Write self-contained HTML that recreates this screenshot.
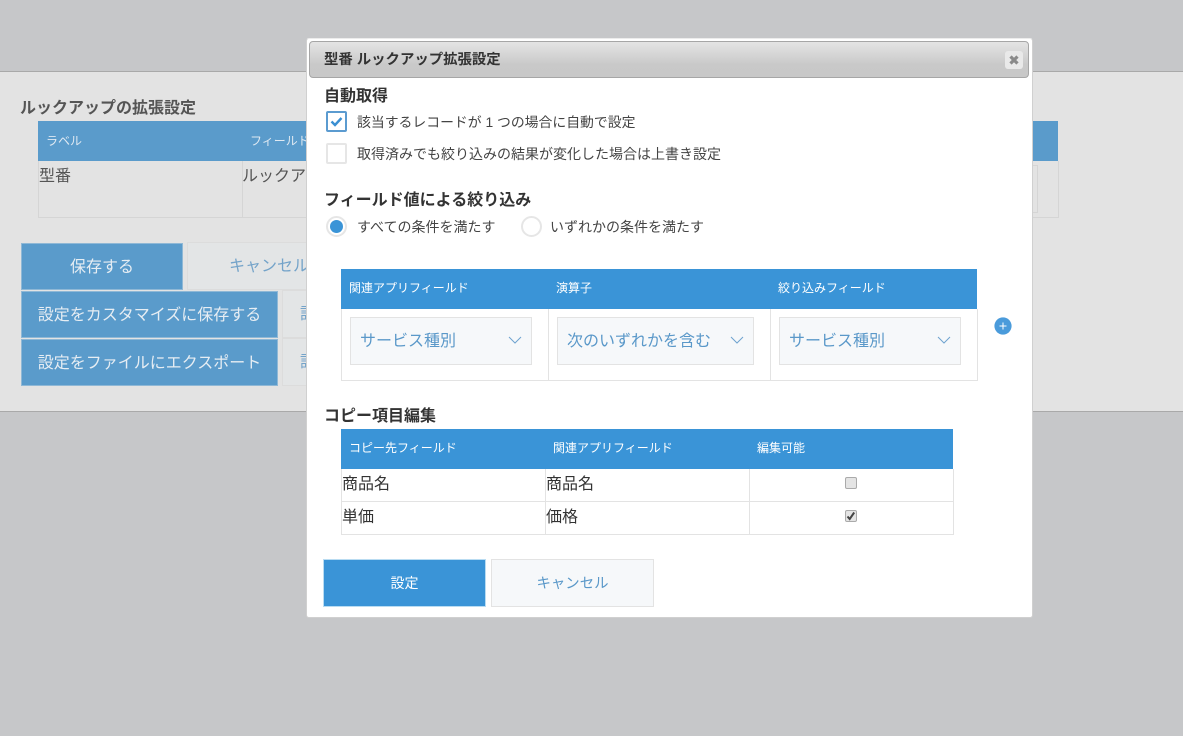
<!DOCTYPE html>
<html lang="ja">
<head>
<meta charset="utf-8">
<title>ルックアップ拡張設定</title>
<style>
html,body{margin:0;padding:0}
body{width:1183px;height:736px;overflow:hidden;position:relative;background:#c6c7c9;font-family:"Liberation Sans","Noto Sans CJK JP",sans-serif;color:#333}
.a{position:absolute;box-sizing:border-box;white-space:nowrap}
.panel{left:0;top:71px;width:1183px;height:341px;background:#e3e3e3;border-top:1px solid #a9a9a9;border-bottom:1px solid #a9a9a9}
.dialog{left:306px;top:38px;width:727px;height:580px;background:#fff;border:1px solid #d0d0d0;border-top-color:#ececec;border-radius:3px}
.title{left:309px;top:41px;width:720px;height:37px;background:linear-gradient(#e4e4e4,#c9c9c9 65%,#c8c8c8);border:1px solid #a6a6a6;border-radius:4px;font-weight:bold;font-size:14.4px;line-height:37px;padding-left:14px;color:#333}
.close{left:1005px;top:51px;width:18px;height:18px;background:#e9e9e9;border-radius:3px}
.h{font-size:16px;font-weight:bold;color:#333;line-height:20px}
.l{font-size:14px;color:#444;line-height:18px}
.th{font-size:12px;color:#fff;line-height:16px}
.td{font-size:16px;color:#333;line-height:20px}
.blue{background:#3a94d7}
.dim{background:#5a9bcb}
.vl{background:#e3e3e3;width:1px}
.hl{background:#e3e3e3;height:1px}
.sel{background:#f6f8fa;border:1px solid #e3e3e3;width:182px;height:48px;color:#5a98c9;font-size:16px;line-height:48px;padding-left:9px}
.btn{text-align:center;font-size:16px}
.dv{background:#d5d5d5;width:1px}
.dh{background:#d5d5d5;height:1px}
</style>
</head>
<body>
<div class="a panel"></div>

<div class="a" style="left:20px;top:99px;font-size:16px;font-weight:bold;color:#555;line-height:20px">ルックアップの拡張設定</div>
<div class="a dim" style="left:38px;top:121px;width:1020px;height:40px"></div>
<div class="a" style="left:46px;top:133px;font-size:12px;color:#dfe9f2;line-height:16px">ラベル</div>
<div class="a" style="left:250px;top:133px;font-size:12px;color:#dfe9f2;line-height:16px">フィールド</div>
<div class="a dv" style="left:38px;top:161px;height:57px"></div>
<div class="a dv" style="left:242px;top:161px;height:57px"></div>
<div class="a dv" style="left:1058px;top:161px;height:57px"></div>
<div class="a dh" style="left:38px;top:217px;width:1021px"></div>
<div class="a" style="left:1032px;top:165px;width:6px;height:48px;border:1px solid #d5d5d5;border-left:0"></div>
<div class="a" style="left:39px;top:167px;font-size:16px;color:#555;line-height:20px">型番</div>
<div class="a" style="left:242px;top:167px;font-size:16px;color:#555;line-height:20px">ルックア</div>

<div class="a dim btn" style="left:21px;top:243px;width:162px;height:47px;color:#e6edf3;line-height:47px;border:1px solid #8fb8d6">保存する</div>
<div class="a btn" style="left:187px;top:242px;width:130px;height:48px;background:#e3e5e6;border:1px solid #dcdcdc;color:#74a3c9;line-height:48px;text-align:left;padding-left:41px">キャンセル</div>
<div class="a dim btn" style="left:21px;top:291px;width:257px;height:47px;color:#e6edf3;line-height:47px;border:1px solid #8fb8d6">設定をカスタマイズに保存する</div>
<div class="a dim btn" style="left:21px;top:339px;width:257px;height:47px;color:#e6edf3;line-height:47px;border:1px solid #8fb8d6">設定をファイルにエクスポート</div>
<div class="a" style="left:282px;top:290px;width:40px;height:48px;background:#e3e5e6;border:1px solid #dcdcdc;color:#74a3c9;line-height:48px;font-size:16px;padding-left:17px;overflow:hidden">設定</div>
<div class="a" style="left:282px;top:338px;width:40px;height:48px;background:#e3e5e6;border:1px solid #dcdcdc;color:#74a3c9;line-height:48px;font-size:16px;padding-left:17px;overflow:hidden">設定</div>

<div class="a dialog"></div>
<div class="a title">型番 ルックアップ拡張設定</div>
<div class="a close"><svg width="18" height="18" viewBox="0 0 18 18" style="display:block"><path d="M5.5 5.5l7 7M12.5 5.5l-7 7" stroke="#8a8a8a" stroke-width="3.2" fill="none"/></svg></div>

<div class="a h" style="left:324px;top:87px">自動取得</div>
<div class="a" style="left:326px;top:111px;width:21px;height:21px;border:2px solid #5b9bd0;border-radius:2px;background:#fff"><svg width="17" height="17" viewBox="0 0 17 17" style="display:block"><path d="M3.5 8.5l3.5 3.5 6.5-7" stroke="#3a8fd2" stroke-width="2.4" fill="none"/></svg></div>
<div class="a l" style="left:357px;top:113px;font-size:13.85px">該当するレコードが 1 つの場合に自動で設定</div>
<div class="a" style="left:326px;top:143px;width:21px;height:21px;border:2px solid #e6e6e6;border-radius:2px;background:#fff"></div>
<div class="a l" style="left:357px;top:145px">取得済みでも絞り込みの結果が変化した場合は上書き設定</div>

<div class="a h" style="left:324px;top:191px">フィールド値による絞り込み</div>
<div class="a" style="left:326px;top:216px;width:21px;height:21px;border:2px solid #e6e6e6;border-radius:50%;background:#fff"></div>
<div class="a" style="left:330px;top:220px;width:13px;height:13px;border-radius:50%;background:#3a94d7"></div>
<div class="a l" style="left:357px;top:218px">すべての条件を満たす</div>
<div class="a" style="left:521px;top:216px;width:21px;height:21px;border:2px solid #e6e6e6;border-radius:50%;background:#fff"></div>
<div class="a l" style="left:550px;top:218px">いずれかの条件を満たす</div>

<div class="a blue" style="left:341px;top:269px;width:636px;height:40px"></div>
<div class="a th" style="left:349px;top:280px">関連アプリフィールド</div>
<div class="a th" style="left:556px;top:280px">演算子</div>
<div class="a th" style="left:778px;top:280px">絞り込みフィールド</div>
<div class="a vl" style="left:341px;top:309px;height:72px"></div>
<div class="a vl" style="left:548px;top:309px;height:72px"></div>
<div class="a vl" style="left:770px;top:309px;height:72px"></div>
<div class="a vl" style="left:977px;top:309px;height:72px"></div>
<div class="a hl" style="left:341px;top:380px;width:637px"></div>

<div class="a sel" style="left:350px;top:317px">サービス種別</div>
<svg class="a" style="left:508px;top:335px" width="14" height="10" viewBox="0 0 14 10"><path d="M1 2l6 6 6-6" stroke="#6ea3cf" stroke-width="1" fill="none"/></svg>
<div class="a sel" style="left:557px;top:317px;width:197px">次のいずれかを含む</div>
<svg class="a" style="left:730px;top:335px" width="14" height="10" viewBox="0 0 14 10"><path d="M1 2l6 6 6-6" stroke="#6ea3cf" stroke-width="1" fill="none"/></svg>
<div class="a sel" style="left:779px;top:317px">サービス種別</div>
<svg class="a" style="left:937px;top:335px" width="14" height="10" viewBox="0 0 14 10"><path d="M1 2l6 6 6-6" stroke="#6ea3cf" stroke-width="1" fill="none"/></svg>

<svg class="a" style="left:994px;top:317px" width="18" height="18" viewBox="0 0 18 18"><circle cx="9" cy="9" r="8.6" fill="#4a9bdb"/><path d="M5.5 9h7M9 5.5v7" stroke="#fff" stroke-width="1"/></svg>

<div class="a h" style="left:324px;top:407px">コピー項目編集</div>
<div class="a blue" style="left:341px;top:429px;width:612px;height:40px"></div>
<div class="a th" style="left:349px;top:440px">コピー先フィールド</div>
<div class="a th" style="left:553px;top:440px">関連アプリフィールド</div>
<div class="a th" style="left:757px;top:440px">編集可能</div>
<div class="a vl" style="left:341px;top:469px;height:66px"></div>
<div class="a vl" style="left:545px;top:469px;height:66px"></div>
<div class="a vl" style="left:749px;top:469px;height:66px"></div>
<div class="a vl" style="left:953px;top:469px;height:66px"></div>
<div class="a hl" style="left:341px;top:501px;width:613px"></div>
<div class="a hl" style="left:341px;top:534px;width:613px"></div>
<div class="a td" style="left:342px;top:475px">商品名</div>
<div class="a td" style="left:546px;top:475px">商品名</div>
<div class="a td" style="left:342px;top:508px">単価</div>
<div class="a td" style="left:546px;top:508px">価格</div>
<div class="a" style="left:845px;top:477px;width:12px;height:12px;background:#e4e4e4;border:1px solid #aaa;border-radius:2px"></div>
<div class="a" style="left:845px;top:510px;width:12px;height:12px;background:#e4e4e4;border:1px solid #aaa;border-radius:2px"><svg width="10" height="10" viewBox="0 0 10 10" style="display:block"><path d="M1.5 5.5l2.2 2.5 4.5-6.5" stroke="#444" stroke-width="2" fill="none"/></svg></div>

<div class="a blue btn" style="left:323px;top:559px;width:163px;height:48px;border:1px solid #b9dcf2;color:#fff;font-size:14px;line-height:47px">設定</div>
<div class="a btn" style="left:491px;top:559px;width:163px;height:48px;background:#f6f8fa;border:1px solid #e3e3e3;color:#5a98c9;font-size:14.4px;line-height:48px">キャンセル</div>
</body>
</html>
